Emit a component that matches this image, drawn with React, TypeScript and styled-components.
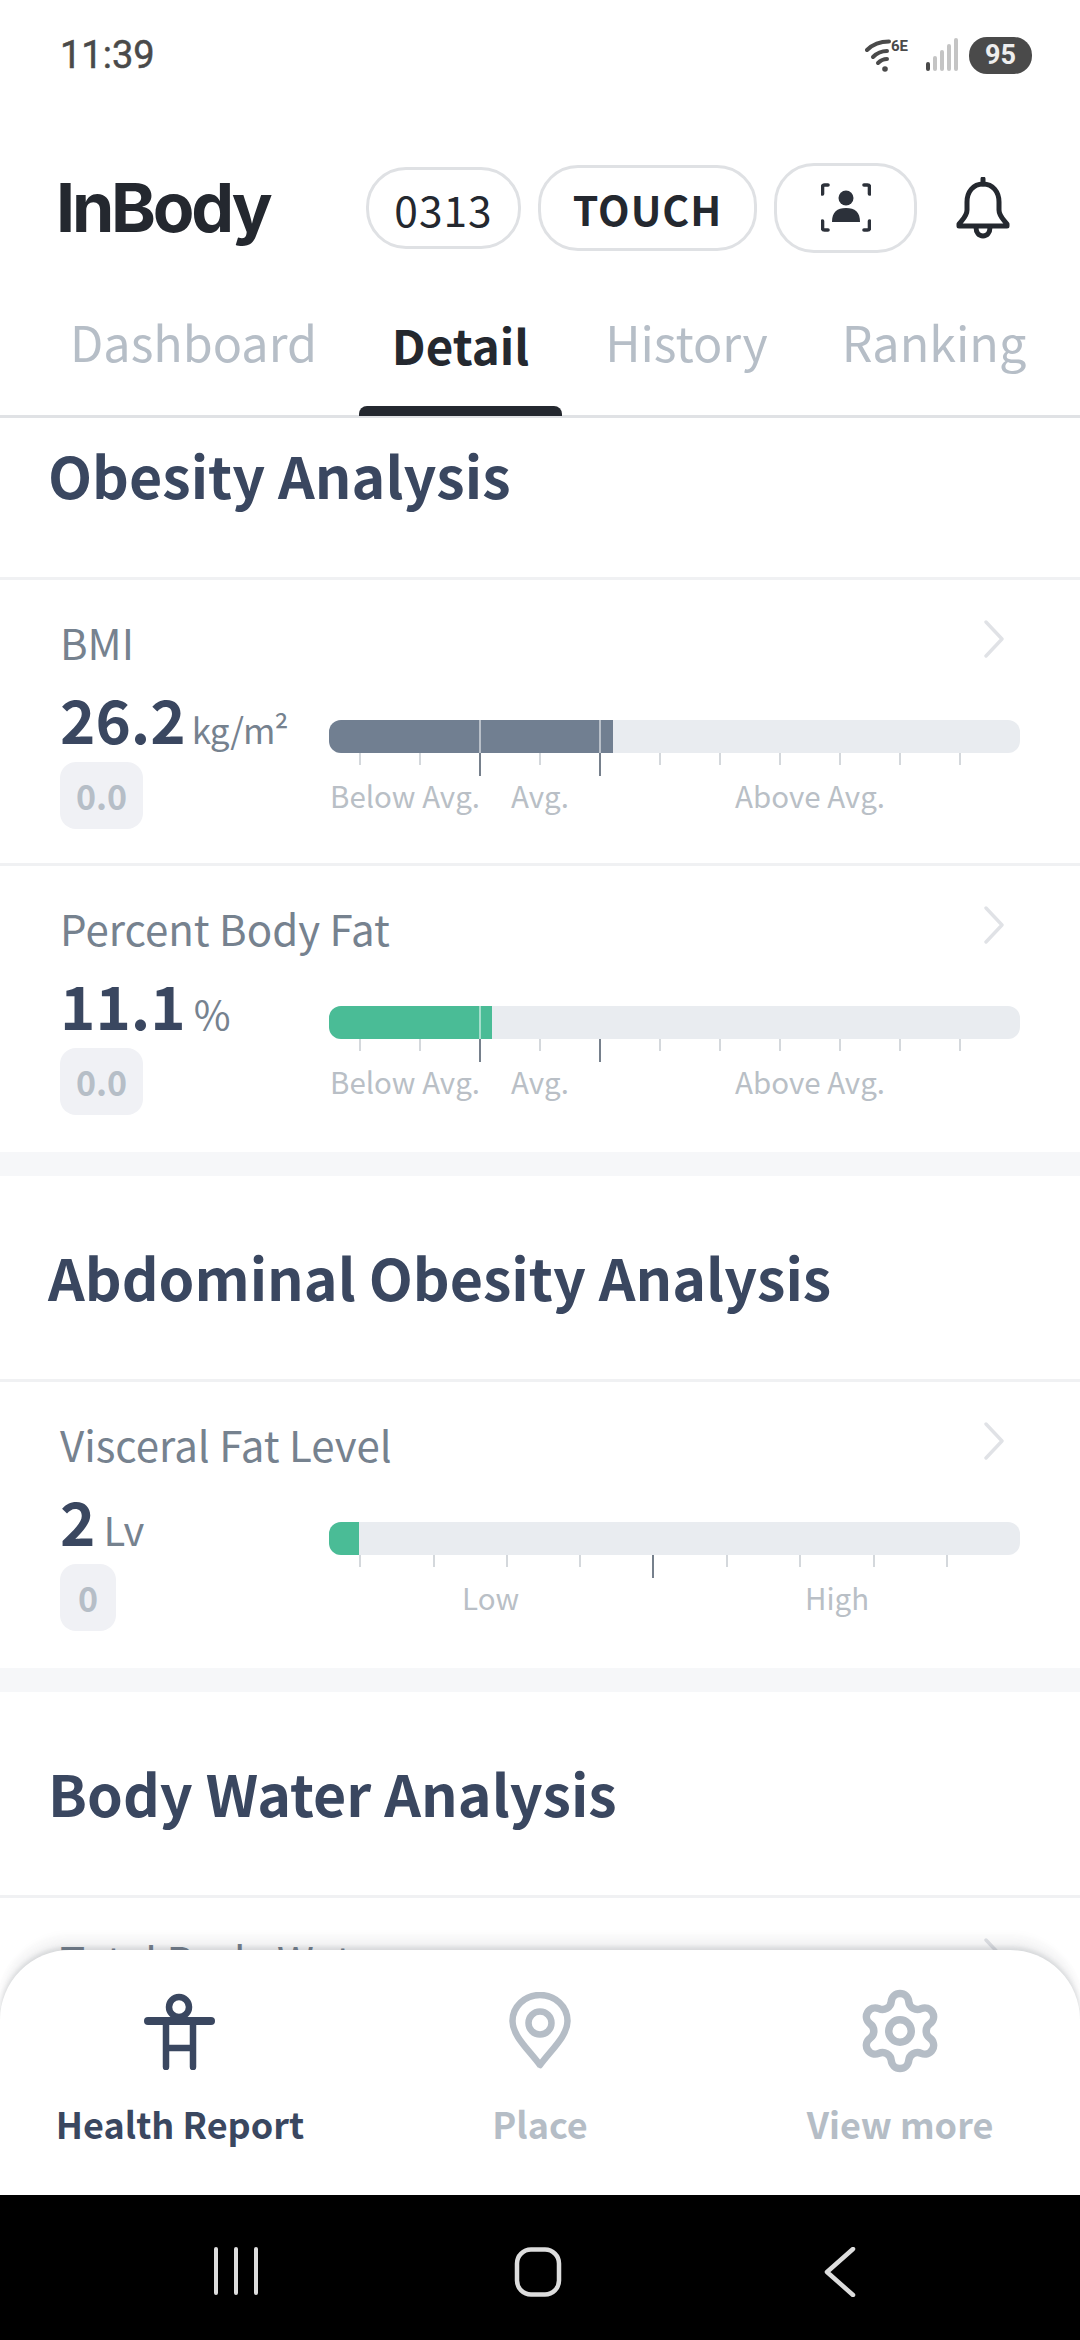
import React from "react";
import styled, { createGlobalStyle } from "styled-components";
import { Settings } from "lucide-react";

const Global = createGlobalStyle`
  html, body { margin: 0; padding: 0; background: #fff; }
  * { box-sizing: border-box; }
`;
const FONT = `"Noto Sans CJK KR", "Noto Sans", sans-serif`;

const Screen = styled.div`
  position: relative; width: 1080px; height: 2340px; overflow: hidden;
  display: flex; flex-direction: column; background: #fff; font-family: ${FONT};
`;
const StatusBar = styled.div`
  height: 110px; flex: none; display: flex; align-items: center; justify-content: space-between;
  padding: 0 48px 0 60px;
`;
const Clock = styled.span`
  font-family: "Roboto", sans-serif; font-size: 38px; font-weight: 400; color: #4a4a4a; letter-spacing: 0;
  -webkit-text-stroke: 0.5px #4a4a4a;
`;
const StatusIcons = styled.div`display: flex; align-items: center; gap: 10px;`;
const Battery = styled.span`
  width: 63px; height: 37px; border-radius: 18px; background: #4a4a4a; color: #eee;
  font-family: "Roboto", sans-serif; font-size: 27px; font-weight: 700;
  display: flex; align-items: center; justify-content: center;
`;
const Header = styled.div`
  height: 196px; flex: none; display: flex; align-items: center; padding: 0 68px 0 60px;
`;
const Logo = styled.span`
  width: 309px; margin-top: -2px; font-family: "Inter", sans-serif; font-size: 68px; font-weight: 700; color: #24282f;
  letter-spacing: -3.2px; line-height: 1; text-indent: -4px;
`;
const Pill = styled.div<{ $w: number; $h: number; $bold?: boolean; $ml: number }>`
  width: ${p => p.$w}px; height: ${p => p.$h}px; margin-left: ${p => p.$ml}px; flex: none;
  border: 3px solid #dfe1e4; border-radius: 40px; display: flex; align-items: center; justify-content: center;
  font-size: ${p => (p.$bold ? 41 : 42.5)}px; font-weight: ${p => (p.$bold ? 700 : 400)}; color: #24282f;
  letter-spacing: 1px;
`;
const BellBox = styled.div`margin-left: 37px; display: flex; flex: none;`;
const Tabs = styled.div`
  height: 112px; flex: none; display: flex; border-bottom: 3px solid #e0e2e5;
`;
const Tab = styled.div<{ $active?: boolean; $left: number; $w: number }>`
  position: relative; margin-left: ${p => p.$left}px; width: ${p => p.$w}px; height: 109px; flex: none;
  display: flex; justify-content: center; align-items: center; padding-bottom: ${p => (p.$active ? 32 : 40)}px;
  font-size: ${p => (p.$active ? 47.5 : 48.5)}px; white-space: nowrap; font-weight: ${p => (p.$active ? 700 : 400)};
  color: ${p => (p.$active ? "#24282f" : "#b6bec7")};
  ${p => p.$active && `&::after { content: ""; position: absolute; left: 0; right: 0; bottom: -1px; height: 10px;
    background: #24282f; border-radius: 8px 8px 0 0; }`}
`;
const Scroll = styled.div`flex: 1; overflow: hidden; min-height: 0;`;
const ScrollInner = styled.div`margin-top: -44px;`;
const Section = styled.section`
  border-bottom: 24px solid #f6f7f9;
`;
const SectionTitle = styled.h2`
  margin: 0; height: 206px; display: flex; align-items: center; padding: 0 0 3px 48px;
  font-size: 57.3px; font-weight: 700; color: #3a4760; border-bottom: 3px solid #f0f1f3;
`;
const Row = styled.div<{ $last?: boolean }>`
  height: 286px; padding: 30px 60px 0 60px; position: relative;
  border-bottom: ${p => (p.$last ? "0" : "3px solid #f0f1f3")};
`;
const RowLabel = styled.div`
  font-size: 42px; line-height: 64px; color: #76828f; font-weight: 400;
`;
const Chevron = styled.svg`
  position: absolute; right: 75px; top: 40px;
`;
const RowBody = styled.div`display: grid; grid-template-columns: 269px 691px; margin-top: 6px;`;
const ValueCol = styled.div`display: flex; flex-direction: column; align-items: flex-start;`;
const Value = styled.div`
  height: 76px; padding-top: 1px; display: flex; align-items: baseline; white-space: nowrap; color: #3a4760;
  font-size: 60px; font-weight: 700; line-height: 74px;
`;
const Unit = styled.span<{ $tight?: boolean }>`
  font-size: ${p => (p.$tight ? 35 : 40)}px; letter-spacing: ${p => (p.$tight ? -1 : 0)}px;
  font-weight: 400; color: #76828f; margin-left: ${p => (p.$tight ? 6 : 8)}px;
`;
const Badge = styled.div`
  margin-top: 6px; height: 67px; min-width: 56px; padding: 0 16px; border-radius: 16px; background: #f0f1f5;
  color: #b6bec7; font-size: 34px; font-weight: 700; display: flex; align-items: center; justify-content: center;
`;
const GraphCol = styled.div`padding-top: 40px;`;
const Track = styled.div`
  position: relative; height: 33px; background: #e9ecf0; border-radius: 12px; overflow: hidden;
`;
const Fill = styled.div<{ $color: string }>`
  height: 100%; background: ${p => p.$color};
`;
const OverLine = styled.div`
  position: absolute; top: 0; bottom: 0; width: 2px; background: rgba(255,255,255,.5);
`;
const Ticks = styled.div`position: relative; height: 23px;`;
const Tick = styled.div<{ $major?: boolean }>`
  position: absolute; top: 0; width: 2px; height: ${p => (p.$major ? 23 : 12)}px;
  background: ${p => (p.$major ? "#76808c" : "#d4d8dc")};
`;
const Scale = styled.div`position: relative; height: 44px; margin-top: -3px;`;
const ScaleLabel = styled.span`
  position: absolute; top: 0; font-size: 29.5px; line-height: 44px; color: #b9bfc6; white-space: nowrap;
`;
const BottomNav = styled.nav`
  position: absolute; left: 0; right: 0; top: 1950px; height: 245px; background: #fff;
  border-radius: 70px 70px 0 0;
  box-shadow: 0 -3px 4px rgba(60,70,80,.14), 0 -10px 8px rgba(60,70,80,.06), 0 -18px 6px rgba(60,70,80,.015);
  display: grid; grid-template-columns: repeat(3, 1fr);
`;
const NavItem = styled.div<{ $active?: boolean }>`
  display: flex; flex-direction: column; align-items: center; padding-top: 38px;
  font-size: 36px; font-weight: 700; color: ${p => (p.$active ? "#3a4760" : "#b5bdc6")};
`;
const NavIcon = styled.div`height: 86px; display: flex; align-items: center; justify-content: center;`;
const NavLabel = styled.span`margin-top: 22px; line-height: 54px;`;
const SystemBar = styled.div`
  position: absolute; left: 0; right: 0; bottom: 0; height: 145px; background: #000;
  display: grid; grid-template-columns: repeat(3, 302px); padding: 52px 0 0 85px; align-items: start;
`;
const SysCell = styled.div`display: flex; justify-content: center;`;

const Wifi = () => (
  <svg width="50" height="36" viewBox="0 0 50 36" fill="none">
    <path d="M2 13C8 7 15 4.5 24 4.5" stroke="#4a4a4a" strokeWidth="4" strokeLinecap="round" />
    <path d="M8 20c4-4 9-6 14-6" stroke="#4a4a4a" strokeWidth="4" strokeLinecap="round" />
    <path d="M13 26c3-3 6-4 9-4" stroke="#4a4a4a" strokeWidth="4" strokeLinecap="round" />
    <circle cx="20" cy="32" r="2.8" fill="#4a4a4a" />
    <text x="26" y="14" fontFamily="Roboto, sans-serif" fontSize="15" fontWeight="700" fill="#4a4a4a">6E</text>
  </svg>
);
const Signal = () => (
  <svg width="34" height="34" viewBox="0 0 34 34">
    {[0, 1, 2, 3, 4].map(i => (
      <rect key={i} x={1 + i * 7} y={24 - i * 6} width="4" height={9 + i * 6} rx="2" fill={i === 0 ? "#4a4a4a" : "#c4c4c4"} />
    ))}
  </svg>
);
const Bell = () => (
  <svg width="58" height="62" viewBox="0 0 58 62" fill="none" stroke="#24282f" strokeWidth="5" strokeLinejoin="round" strokeLinecap="round">
    <path d="M29 7c-10 0-16 8-16 18v8c0 6-4 9-8 14v2h48v-2c-4-5-8-8-8-14v-8c0-10-6-18-16-18Z" />
    <path d="M29 2v5" />
    <path d="M22 50c0 6 3 9 7 9s7-3 7-9" />
  </svg>
);
const FaceScan = () => (
  <svg width="50" height="50" viewBox="0 0 50 50" fill="none">
    <g stroke="#2c313a" strokeWidth="3.6" strokeLinecap="round" strokeLinejoin="round">
      <path d="M1.5 11V4a2 2 0 0 1 2-2H7" /><path d="M48.5 11V4a2 2 0 0 0-2-2H43" />
      <path d="M1.5 38v7a2 2 0 0 0 2 2H7" /><path d="M48.5 38v7a2 2 0 0 1-2 2H43" />
    </g>
    <circle cx="25" cy="15" r="7.5" fill="#2c313a" />
    <path d="M11 39c0-10 5-14 14-14s14 4 14 14Z" fill="#2c313a" />
  </svg>
);
const ChevronIcon = () => (
  <Chevron width="22" height="38" viewBox="0 0 22 38" fill="none">
    <path d="M3 2l16 17L3 36" stroke="#e0e2e6" strokeWidth="3.4" strokeLinecap="round" strokeLinejoin="round" />
  </Chevron>
);
const PersonIcon = () => (
  <svg width="72" height="78" viewBox="0 0 72 78" fill="none" stroke="#3a4760">
    <circle cx="35" cy="15" r="10" strokeWidth="6.5" />
    <path d="M4 29h63" strokeWidth="8" strokeLinecap="round" />
    <path d="M22 29v46M49 29v46" strokeWidth="6.5" strokeLinecap="round" />
    <path d="M22 56h27" strokeWidth="6.5" />
  </svg>
);
const PinIcon = () => (
  <svg width="62" height="78" viewBox="0 0 62 78" fill="none" stroke="#b5bdc6" strokeWidth="6.5">
    <path d="M31 73C20 58 3.5 44 3.5 29A27.5 26 0 0 1 58.5 29C58.5 44 42 58 31 73Z" strokeLinejoin="round" />
    <circle cx="31" cy="31" r="11.5" />
  </svg>
);

type RowData = {
  label: string; value: string; unit: string; tight?: boolean; badge: string; fill: number; color: string;
  ticks: { x: number; major?: boolean }[]; over?: number[]; scale: { x: number; t: string }[];
};

const avgTicks = [30, 90, 150, 210, 270, 330, 390, 450, 510, 570, 630].map(x => ({ x, major: x === 150 || x === 270 }));
const avgScale = [{ x: 1, t: "Below Avg." }, { x: 182, t: "Avg." }, { x: 406, t: "Above Avg." }];
const obesity: RowData[] = [
  { label: "BMI", value: "26.2", unit: "kg/m²", tight: true, badge: "0.0", fill: 284, color: "#717f91", ticks: avgTicks, over: [150, 270], scale: avgScale },
  { label: "Percent Body Fat", value: "11.1", unit: "%", badge: "0.0", fill: 163, color: "#4abc96", ticks: avgTicks, over: [150], scale: avgScale },
];
const abdominal: RowData[] = [
  {
    label: "Visceral Fat Level", value: "2", unit: "Lv", badge: "0", fill: 30, color: "#4abc96",
    ticks: [30, 103.5, 177, 250, 323, 397, 470, 544, 617].map((x, i) => ({ x, major: i === 4 })),
    scale: [{ x: 133, t: "Low" }, { x: 476, t: "High" }],
  },
];

const MetricRow = ({ d, last }: { d: RowData; last?: boolean }) => (
  <Row $last={last}>
    <RowLabel>{d.label}</RowLabel>
    <ChevronIcon />
    <RowBody>
      <ValueCol>
        <Value>{d.value}<Unit $tight={d.tight}>{d.unit}</Unit></Value>
        <Badge>{d.badge}</Badge>
      </ValueCol>
      <GraphCol>
        <Track>
          <Fill $color={d.color} style={{ width: d.fill }} />
          {d.over?.map(x => <OverLine key={x} style={{ left: x }} />)}
        </Track>
        <Ticks>{d.ticks.map(t => <Tick key={t.x} $major={t.major} style={{ left: t.x }} />)}</Ticks>
        <Scale>{d.scale.map(s => <ScaleLabel key={s.t} style={{ left: s.x }}>{s.t}</ScaleLabel>)}</Scale>
      </GraphCol>
    </RowBody>
  </Row>
);

export default function App() {
  return (
    <Screen>
      <Global />
      <StatusBar>
        <Clock>11:39</Clock>
        <StatusIcons><Wifi /><Signal /><Battery>95</Battery></StatusIcons>
      </StatusBar>
      <Header>
        <Logo>InBody</Logo>
        <Pill $w={155} $h={82} $ml={0}>0313</Pill>
        <Pill $w={219} $h={86} $ml={17} $bold>TOUCH</Pill>
        <Pill $w={143} $h={90} $ml={17}><FaceScan /></Pill>
        <BellBox><Bell /></BellBox>
      </Header>
      <Tabs>
        <Tab $left={72} $w={243}>Dashboard</Tab>
        <Tab $left={44} $w={203} $active>Detail</Tab>
        <Tab $left={44} $w={161}>History</Tab>
        <Tab $left={76} $w={182}>Ranking</Tab>
      </Tabs>
      <Scroll>
        <ScrollInner>
          <Section>
            <SectionTitle>Obesity Analysis</SectionTitle>
            {obesity.map((d, i) => <MetricRow key={d.label} d={d} last={i === obesity.length - 1} />)}
          </Section>
          <Section>
            <SectionTitle>Abdominal Obesity Analysis</SectionTitle>
            {abdominal.map(d => <MetricRow key={d.label} d={d} last />)}
          </Section>
          <Section>
            <SectionTitle>Body Water Analysis</SectionTitle>
            <MetricRow last d={{ label: "Total Body Water", value: "", unit: "", badge: "", fill: 0, color: "#717f91", ticks: [], scale: [] }} />
          </Section>
        </ScrollInner>
      </Scroll>
      <BottomNav>
        <NavItem $active><NavIcon><PersonIcon /></NavIcon><NavLabel>Health Report</NavLabel></NavItem>
        <NavItem><NavIcon><PinIcon /></NavIcon><NavLabel>Place</NavLabel></NavItem>
        <NavItem><NavIcon><Settings size={90} strokeWidth={2} color="#b5bdc6" /></NavIcon><NavLabel>View more</NavLabel></NavItem>
      </BottomNav>
      <SystemBar>
        <SysCell>
          <svg width="50" height="48" viewBox="0 0 50 48" stroke="#ddd" strokeWidth="4" strokeLinecap="round">
            <path d="M5 2v44M25 2v44M45 2v44" />
          </svg>
        </SysCell>
        <SysCell>
          <svg width="50" height="50" viewBox="0 0 50 50" fill="none" stroke="#ddd" strokeWidth="4.5">
            <rect x="4" y="2.5" width="42" height="45" rx="14" />
          </svg>
        </SysCell>
        <SysCell>
          <svg width="34" height="50" viewBox="0 0 34 50" fill="none" stroke="#ddd" strokeWidth="4.5" strokeLinecap="round" strokeLinejoin="round">
            <path d="M30 2L4 25l26 23" />
          </svg>
        </SysCell>
      </SystemBar>
    </Screen>
  );
}
